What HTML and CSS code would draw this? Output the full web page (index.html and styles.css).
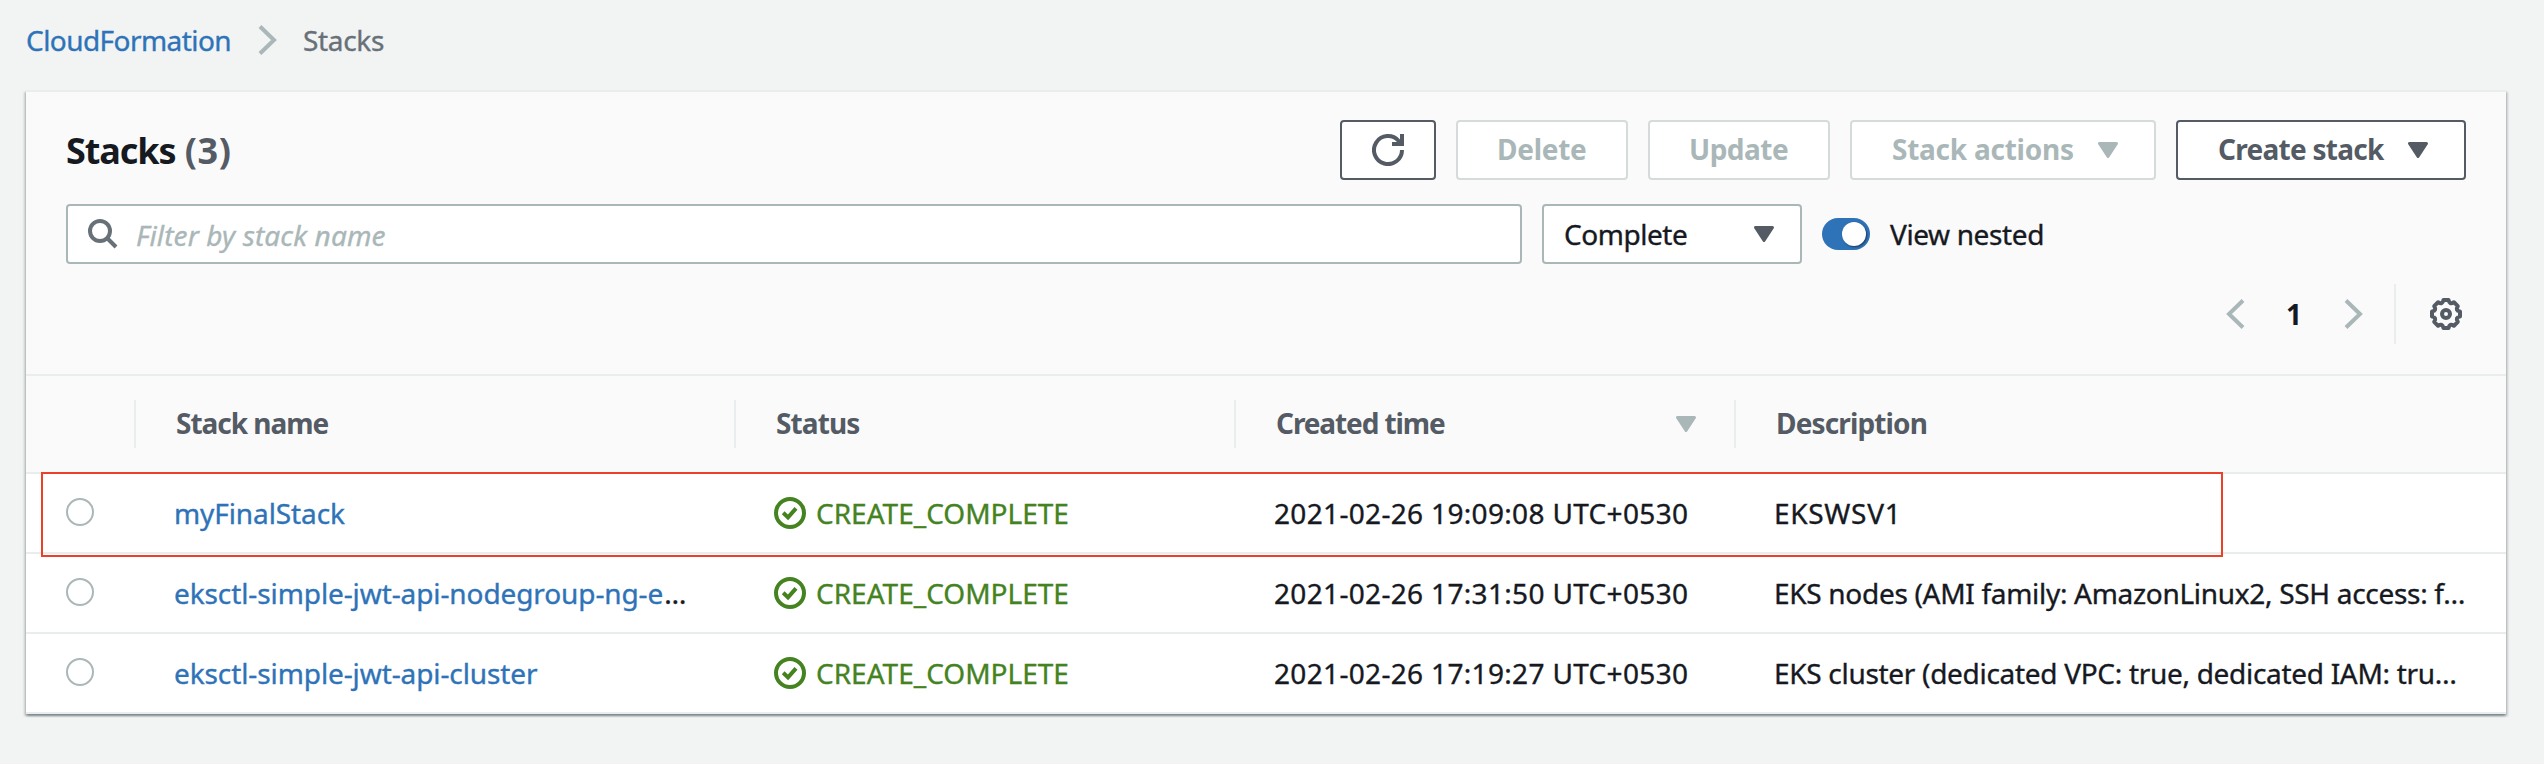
FILE: index.html
```html
<!DOCTYPE html>
<html lang="en">
<head>
<meta charset="utf-8">
<title>CloudFormation - Stacks</title>
<link rel="stylesheet" href="styles.css">
</head>
<body>
<svg class="defs" width="0" height="0">
  <symbol id="caret" viewBox="0 0 20 16"><path d="M1.5 1.5h17L10 14.5z" fill="currentColor" stroke="currentColor" stroke-width="3" stroke-linejoin="round"/></symbol>
  <symbol id="chevron" viewBox="0 0 20 32"><path d="M2 2.5 16 16 2 29.5" fill="none" stroke="currentColor" stroke-width="4"/></symbol>
  <symbol id="check" viewBox="-16 -16 32 32"><g fill="none" stroke="currentColor" stroke-width="4"><circle r="14"/><path d="M-6.8-.2-2 4.4 6-4.6"/></g></symbol>
</svg>

<nav class="breadcrumb">
  <a class="link crumb-root" href="#">CloudFormation</a>
  <svg class="crumb-sep" width="20" height="32"><use href="#chevron"/></svg>
  <span class="crumb-here">Stacks</span>
</nav>

<main class="card">
  <header class="tools">
    <div class="title-row">
      <h1 class="title">Stacks <span class="count">(3)</span></h1>
      <button class="btn btn-refresh" aria-label="Refresh">
        <svg width="32" height="32" viewBox="-16 -16 32 32" fill="none" stroke="currentColor" stroke-width="4"><path d="M14 0A14 14 0 1 1 10.5-9.2L13-6"/><path d="M14-16V-6H4"/></svg>
      </button>
      <button class="btn disabled btn-delete">Delete</button>
      <button class="btn disabled btn-update">Update</button>
      <button class="btn disabled btn-actions"><span>Stack actions</span><svg class="caret" width="20" height="16"><use href="#caret"/></svg></button>
      <button class="btn btn-create"><span>Create stack</span><svg class="caret" width="20" height="16"><use href="#caret"/></svg></button>
    </div>
    <div class="filter-row">
      <div class="search">
        <svg class="search-icon" width="30" height="30" viewBox="0 0 30 30" fill="none" stroke="currentColor" stroke-width="4"><circle cx="12" cy="12" r="10"/><path d="m19 19 9 9"/></svg>
        <span class="placeholder">Filter by stack name</span>
      </div>
      <div class="select"><span>Complete</span><svg class="caret" width="20" height="16"><use href="#caret"/></svg></div>
      <div class="toggle"><span class="knob"></span></div>
      <span class="toggle-label">View nested</span>
    </div>
    <div class="page-row">
      <svg class="prev" width="20" height="32"><use href="#chevron"/></svg>
      <span class="page">1</span>
      <svg class="next" width="20" height="32"><use href="#chevron"/></svg>
      <span class="divider"></span>
      <svg class="gear" width="32" height="32" viewBox="-16 -16 32 32" fill="none" stroke="currentColor" stroke-width="4" stroke-linejoin="round"><circle r="4"/><path d="M-2.6-14H2.6Q3.4-9 7.9-11.8L11.8-7.9Q9-3.4 14-2.6V2.6Q9 3.4 11.8 7.9L7.9 11.8Q3.4 9 2.6 14H-2.6Q-3.4 9-7.9 11.8L-11.8 7.9Q-9 3.4-14 2.6V-2.6Q-9-3.4-11.8-7.9L-7.9-11.8Q-3.4-9-2.6-14Z"/></svg>
    </div>
  </header>

  <section class="table">
    <div class="row head">
      <span></span>
      <span class="th h-name">Stack name</span>
      <span class="th h-status">Status</span>
      <span class="th h-time"><span>Created time</span><svg class="caret sort" width="20" height="16"><use href="#caret"/></svg></span>
      <span class="th h-desc">Description</span>
    </div>
    <div class="row">
      <span class="radio"></span>
      <span class="td name"><a class="link" href="#">myFinalStack</a></span>
      <span class="td status"><svg width="32" height="32"><use href="#check"/></svg>CREATE_COMPLETE</span>
      <span class="td time">2021-02-26 19:09:08 UTC+0530</span>
      <span class="td desc short">EKSWSV1</span>
      <span class="highlight"></span>
    </div>
    <div class="row">
      <span class="radio"></span>
      <span class="td name"><a class="link" href="#">eksctl-simple-jwt-api-nodegroup-ng-e</a><span class="more">…</span></span>
      <span class="td status"><svg width="32" height="32"><use href="#check"/></svg>CREATE_COMPLETE</span>
      <span class="td time">2021-02-26 17:31:50 UTC+0530</span>
      <span class="td desc">EKS nodes (AMI family: AmazonLinux2, SSH access: f…</span>
    </div>
    <div class="row">
      <span class="radio"></span>
      <span class="td name"><a class="link" href="#">eksctl-simple-jwt-api-cluster</a></span>
      <span class="td status"><svg width="32" height="32"><use href="#check"/></svg>CREATE_COMPLETE</span>
      <span class="td time">2021-02-26 17:19:27 UTC+0530</span>
      <span class="td desc">EKS cluster (dedicated VPC: true, dedicated IAM: tru…</span>
    </div>
  </section>
</main>
</body>
</html>
```
FILE: styles.css
```css
* { box-sizing: border-box; }
body {
  margin: 0;
  height: 764px;
  background: #f2f3f3;
  color: #16191f;
  font: 28px/40px "Noto Sans", "Open Sans", sans-serif;
  white-space: nowrap;
  -webkit-text-stroke: .35px currentColor;
}
h1, button, .head, .page { -webkit-text-stroke: 0; }
svg { display: block; flex: none; }
.defs { position: absolute; }
.link { color: #2e73b8; text-decoration: none; }

.breadcrumb { display: flex; align-items: center; height: 90px; padding: 0 0 10px 26px; }
.crumb-root { width: 232px; padding-bottom: 1px; letter-spacing: -0.56px; }
.crumb-sep { width: 20px; margin-right: 25px; color: #aab7b8; }
.crumb-here { padding-bottom: 1px; color: #687078; letter-spacing: -0.32px; }

.card {
  width: 2480px;
  margin-left: 26px;
  background: #fff;
  border-top: 2px solid #eaeded;
  box-shadow: 0 2px 2px 0 rgba(0, 28, 36, .3), 2px 2px 2px 0 rgba(0, 28, 36, .15), -2px 2px 2px 0 rgba(0, 28, 36, .15);
}
.tools {
  display: flex;
  flex-direction: column;
  height: 284px;
  padding: 28px 40px 0;
  background: #fafafa;
  border-bottom: 2px solid #eaeded;
}

.title-row { display: flex; height: 60px; }
.title { flex: 1; margin: 0; padding-top: 1px; font-size: 36px; line-height: 59px; letter-spacing: -1.1px; }
.count { margin-left: 1px; color: #545b64; letter-spacing: .6px; }
.btn {
  display: flex;
  align-items: center;
  height: 60px;
  margin: 0 0 0 20px;
  padding: 0 0 2px 40px;
  background: #fff;
  border: 2px solid #545b64;
  border-radius: 4px;
  color: #545b64;
  font: bold 28px/40px "Noto Sans", "Open Sans", sans-serif;
}
.btn.disabled { border-color: #d5dbdb; color: #aab7b8; }
.btn-refresh { width: 96px; padding: 0 0 0 30px; }
.btn-delete { width: 172px; padding-left: 39px; letter-spacing: -.28px; }
.btn-update { width: 182px; letter-spacing: -.5px; padding-left: 39px; }
.btn-actions { width: 306px; letter-spacing: -.25px; }
.btn-create { width: 290px; letter-spacing: -.73px; padding-left: 40px; }
.btn .caret { margin: 2px 36px 0 auto; }

.filter-row { display: flex; align-items: center; height: 60px; margin-top: 24px; }
.search, .select {
  display: flex;
  align-items: center;
  height: 60px;
  background: #fff;
  border: 2px solid #aab7b8;
  border-radius: 4px;
}
.search { width: 1456px; padding-left: 20px; color: #687078; }
.placeholder { margin-left: 18px; padding-top: 2px; color: #aab7b8; font-style: italic; letter-spacing: .12px; }
.select { width: 260px; margin-left: 20px; padding: 0 26px 0 20px; letter-spacing: -.45px; }
.select > span, .toggle-label { padding-bottom: 1px; }
.select .caret { margin-left: auto; color: #545b64; }
.toggle {
  display: flex;
  justify-content: flex-end;
  align-items: center;
  width: 48px;
  height: 32px;
  margin-left: 20px;
  padding-right: 4px;
  border-radius: 16px;
  background: #2e73b8;
}
.knob { width: 24px; height: 24px; border-radius: 50%; background: #fff; box-shadow: 1px 1px 2px rgba(0, 0, 0, .5); }
.toggle-label { margin-left: 20px; letter-spacing: -.38px; }

.page-row { display: flex; align-items: center; justify-content: flex-end; height: 60px; margin: 20px -4px 0 0; color: #aab7b8; }
.prev { transform: scaleX(-1); }
.page { width: 20px; margin: 0 40px 0 39px; color: #16191f; font-weight: bold; text-align: center; }
.divider { width: 2px; height: 60px; margin: 0 34px 0 30px; background: #eaeded; }
.gear { color: #545b64; margin-right: 8px; }

.row {
  position: relative;
  display: grid;
  grid-template-columns: 110px 600px 500px 500px 770px;
  align-items: center;
  height: 80px;
  border-bottom: 2px solid #eaeded;
}
.row.head { height: 98px; background: #fafafa; color: #545b64; font-weight: bold; }
.th { display: flex; align-items: center; height: 48px; padding: 0 0 2px 40px; border-left: 2px solid #eaeded; margin-left: -2px; }
.h-name { letter-spacing: -1.02px; }
.h-status { letter-spacing: -.9px; }
.h-time { letter-spacing: -1.1px; }
.h-desc { letter-spacing: -.86px; }
.sort { margin: 2px 40px 0 auto; color: #aab7b8; }
.radio { width: 28px; height: 28px; margin: -2px 0 0 40px; border: 2px solid #aab7b8; border-radius: 50%; background: #fff; }
.td { padding-left: 38px; }
.name { letter-spacing: -.1px; }
.more { margin-left: 1px; letter-spacing: 0; }
.status { display: flex; align-items: center; gap: 10px; color: #44831f; letter-spacing: 0; }
.time { letter-spacing: .33px; }
.desc { letter-spacing: -.3px; padding-left: 38px; }
.desc.short { letter-spacing: .7px; }
.highlight { position: absolute; left: 15px; top: -2px; width: 2182px; height: 85px; border: 2px solid #eb4128; z-index: 1; }
```
